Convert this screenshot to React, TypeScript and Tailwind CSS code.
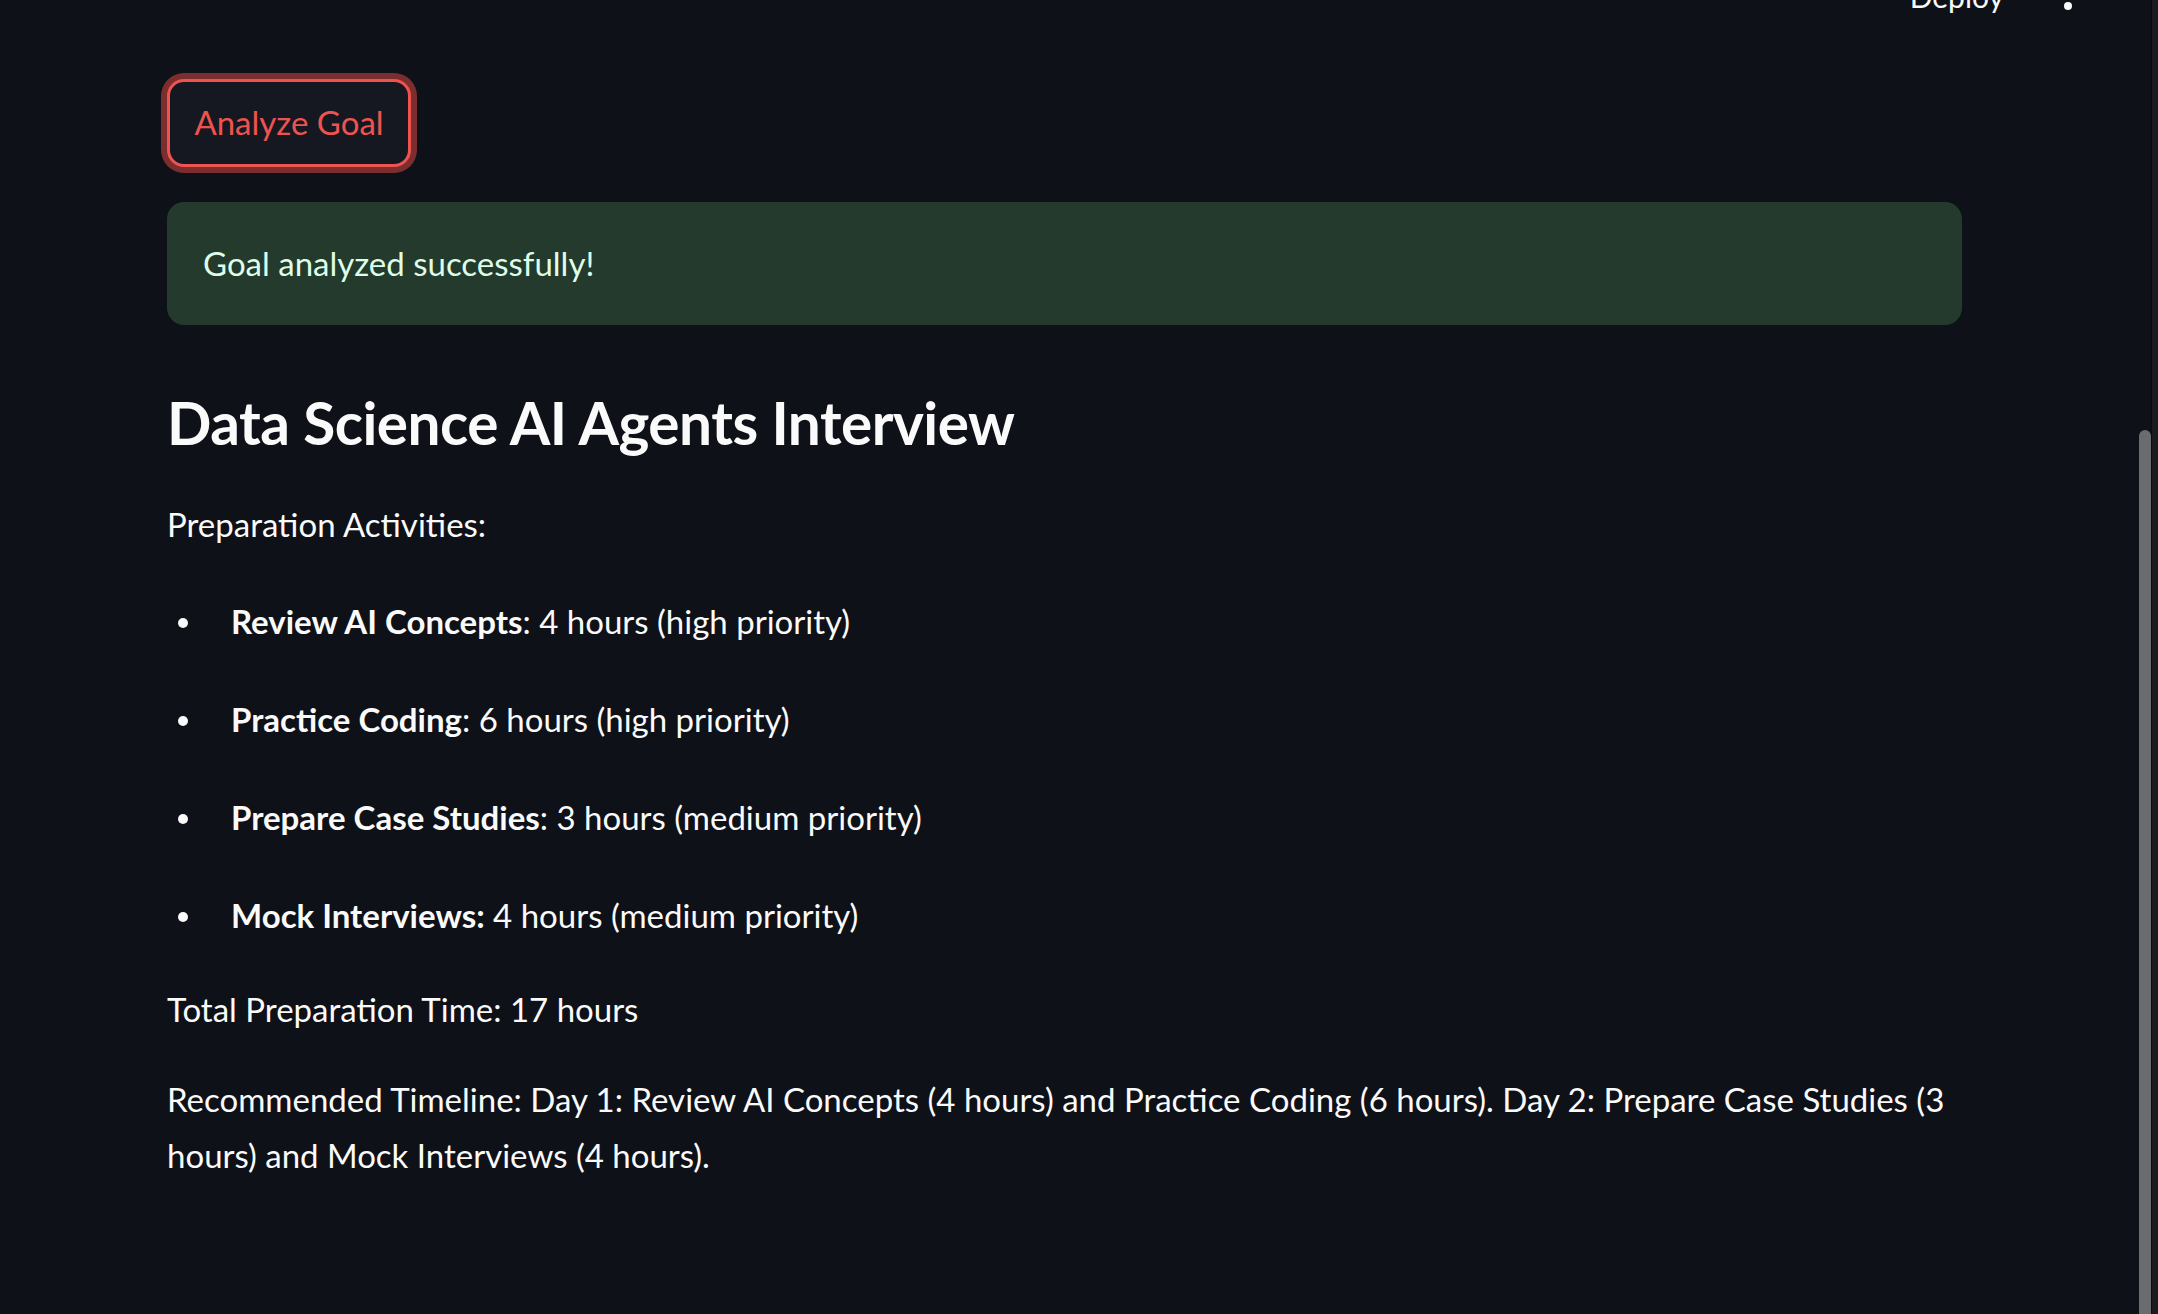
import React from "react";

type Activity = {
  label: string;
  rest: string;
};

const activities: Activity[] = [
  { label: "Review AI Concepts", rest: ": 4 hours (high priority)" },
  { label: "Practice Coding", rest: ": 6 hours (high priority)" },
  { label: "Prepare Case Studies", rest: ": 3 hours (medium priority)" },
  { label: "Mock Interviews:", rest: " 4 hours (medium priority)" }
];

const ActivityItem = ({ item }: { item: Activity }) => (
  <li className="flex items-center h-[56px]">
    <span className="w-[64px] flex justify-start pl-[11px]">
      <span className="block w-[10px] h-[10px] rounded-full bg-[#fafafa] mt-[4px]" />
    </span>
    <span>
      <strong className="font-bold">{item.label}</strong>
      {item.rest}
    </span>
  </li>
);

export default function App() {
  return (
    <div
      className="relative w-full h-[1314px] overflow-hidden bg-[#0e1117] text-[#fafafa]"
      style={{ fontFamily: "Lato, 'Noto Sans', sans-serif" }}
    >
      {/* header, mostly scrolled away */}
      <div className="absolute top-0 left-0 right-0 h-[14px] overflow-hidden flex justify-end pr-[86px]">
        <span className="text-[30px] leading-none -mt-[19px] text-[#fafafa]">Deploy</span>
        <span className="ml-[60px] block w-[8px] h-[8px] rounded-full bg-[#fafafa] mt-[2px]" />
      </div>

      <main className="pl-[167px] pt-[79px] w-[1962px]">
        <button className="flex items-center justify-center w-[244px] h-[88px] rounded-[17px] border-[3px] border-[#ee5350] bg-[#151820] text-[#ee5350] text-[33px] shadow-[0_0_0_6px_rgba(215,70,66,0.55)]">
          Analyze Goal
        </button>

        <div className="mt-[35px] h-[123px] flex items-center px-[36px] rounded-[17px] bg-[#233a2c] text-[#dffde9] text-[33px]">
          Goal analyzed successfully!
        </div>

        <h2 className="mt-[61px] text-[58.5px] leading-[72px] font-bold tracking-[-0.5px]">
          Data Science AI Agents Interview
        </h2>

        <div className="text-[33px] leading-[56px]">
          <p className="mt-[38px]">Preparation Activities:</p>

          <ul className="mt-[41px] flex flex-col gap-[42px]">
            {activities.map((a) => (
              <ActivityItem key={a.label} item={a} />
            ))}
          </ul>

          <p className="mt-[38px]">Total Preparation Time: 17 hours</p>

          <p className="mt-[34px]">
            Recommended Timeline: Day 1: Review AI Concepts (4 hours) and Practice Coding (6 hours). Day 2:
            Prepare Case Studies (3 hours) and Mock Interviews (4 hours).
          </p>
        </div>
      </main>

      {/* right edge / scrollbar */}
      <div className="absolute top-0 right-0 h-full w-[7px] bg-[#1b1c1f] border-l border-[#0a0b0e]" />
      <div className="absolute right-[7px] top-[430px] bottom-0 w-[12px] rounded-t-full bg-[#6b6c70]" />
    </div>
  );
}
